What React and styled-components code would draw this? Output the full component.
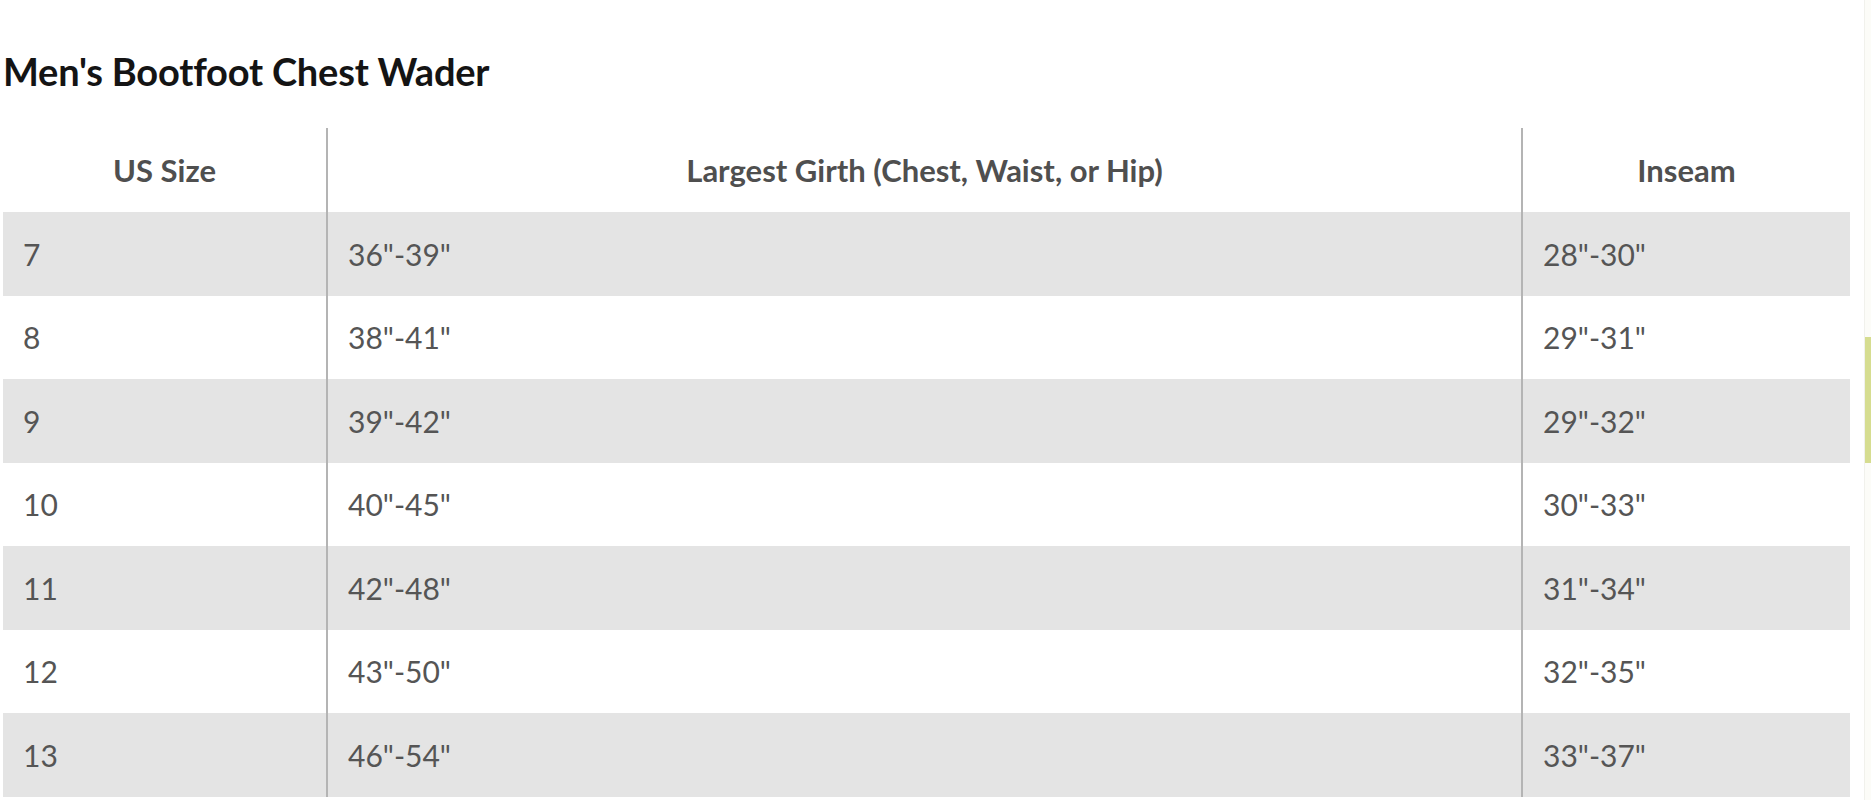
import React from 'react'
import styled, { createGlobalStyle } from 'styled-components'

const GlobalStyle = createGlobalStyle`
	html, body {
		margin: 0;
		padding: 0;
		background: #ffffff;
		font-family: 'Lato', 'Liberation Sans', sans-serif;
	}
`

const Page = styled.div`
	display: flex;
	width: 1871px;
	height: 800px;
	overflow: hidden;
`

const Content = styled.main`
	flex: 1;
	padding-left: 3px;
`

const Title = styled.h2`
	margin: 48px 0 34px;
	font-size: 38px;
	line-height: 46px;
	font-weight: 700;
	color: #141414;
	letter-spacing: -0.2px;
`

const Table = styled.div`
	width: 1847px;
	display: flex;
	flex-direction: column;
`

const Row = styled.div`
	display: grid;
	grid-template-columns: 323px 1195px 1fr;
	height: ${(p) => (p.$head ? '84px' : '83.5px')};
	background: ${(p) => (p.$shaded ? '#e4e4e4' : 'transparent')};
`

const Cell = styled.div`
	display: flex;
	align-items: center;
	justify-content: ${(p) => (p.$head ? 'center' : 'flex-start')};
	padding: ${(p) => (p.$head ? '0' : '0 0 0 20px')};
	font-size: ${(p) => (p.$head ? '31px' : '30px')};
	font-weight: ${(p) => (p.$head ? 700 : 400)};
	color: ${(p) => (p.$head ? '#4f4f4f' : '#555555')};
	border-left: ${(p) => (p.$divided ? '2px solid #b4b4b4' : 'none')};
	white-space: nowrap;
`

const Scrollbar = styled.div`
	width: 6px;
	background: #fcfcf8;
	border-left: 1px solid #f1f1ec;
	display: flex;
	flex-direction: column;

	.thumb {
		margin-top: 337px;
		height: 126px;
		background: #d6dd90;
	}
`

const rows = [
	['7', '36"-39"', '28"-30"'],
	['8', '38"-41"', '29"-31"'],
	['9', '39"-42"', '29"-32"'],
	['10', '40"-45"', '30"-33"'],
	['11', '42"-48"', '31"-34"'],
	['12', '43"-50"', '32"-35"'],
	['13', '46"-54"', '33"-37"'],
]

const headers = ['US Size', 'Largest Girth (Chest, Waist, or Hip)', 'Inseam']

export default function App() {
	return (
		<Page>
			<GlobalStyle />
			<Content>
				<Title>Men's Bootfoot Chest Wader</Title>
				<Table>
					<Row $head>
						{headers.map((h, i) => (
							<Cell key={h} $head $divided={i > 0}>
								{h}
							</Cell>
						))}
					</Row>
					{rows.map((r, idx) => (
						<Row key={r[0]} $shaded={idx % 2 === 0}>
							{r.map((v, i) => (
								<Cell key={i} $divided={i > 0}>
									{v}
								</Cell>
							))}
						</Row>
					))}
				</Table>
			</Content>
			<Scrollbar>
				<div className='thumb' />
			</Scrollbar>
		</Page>
	)
}
